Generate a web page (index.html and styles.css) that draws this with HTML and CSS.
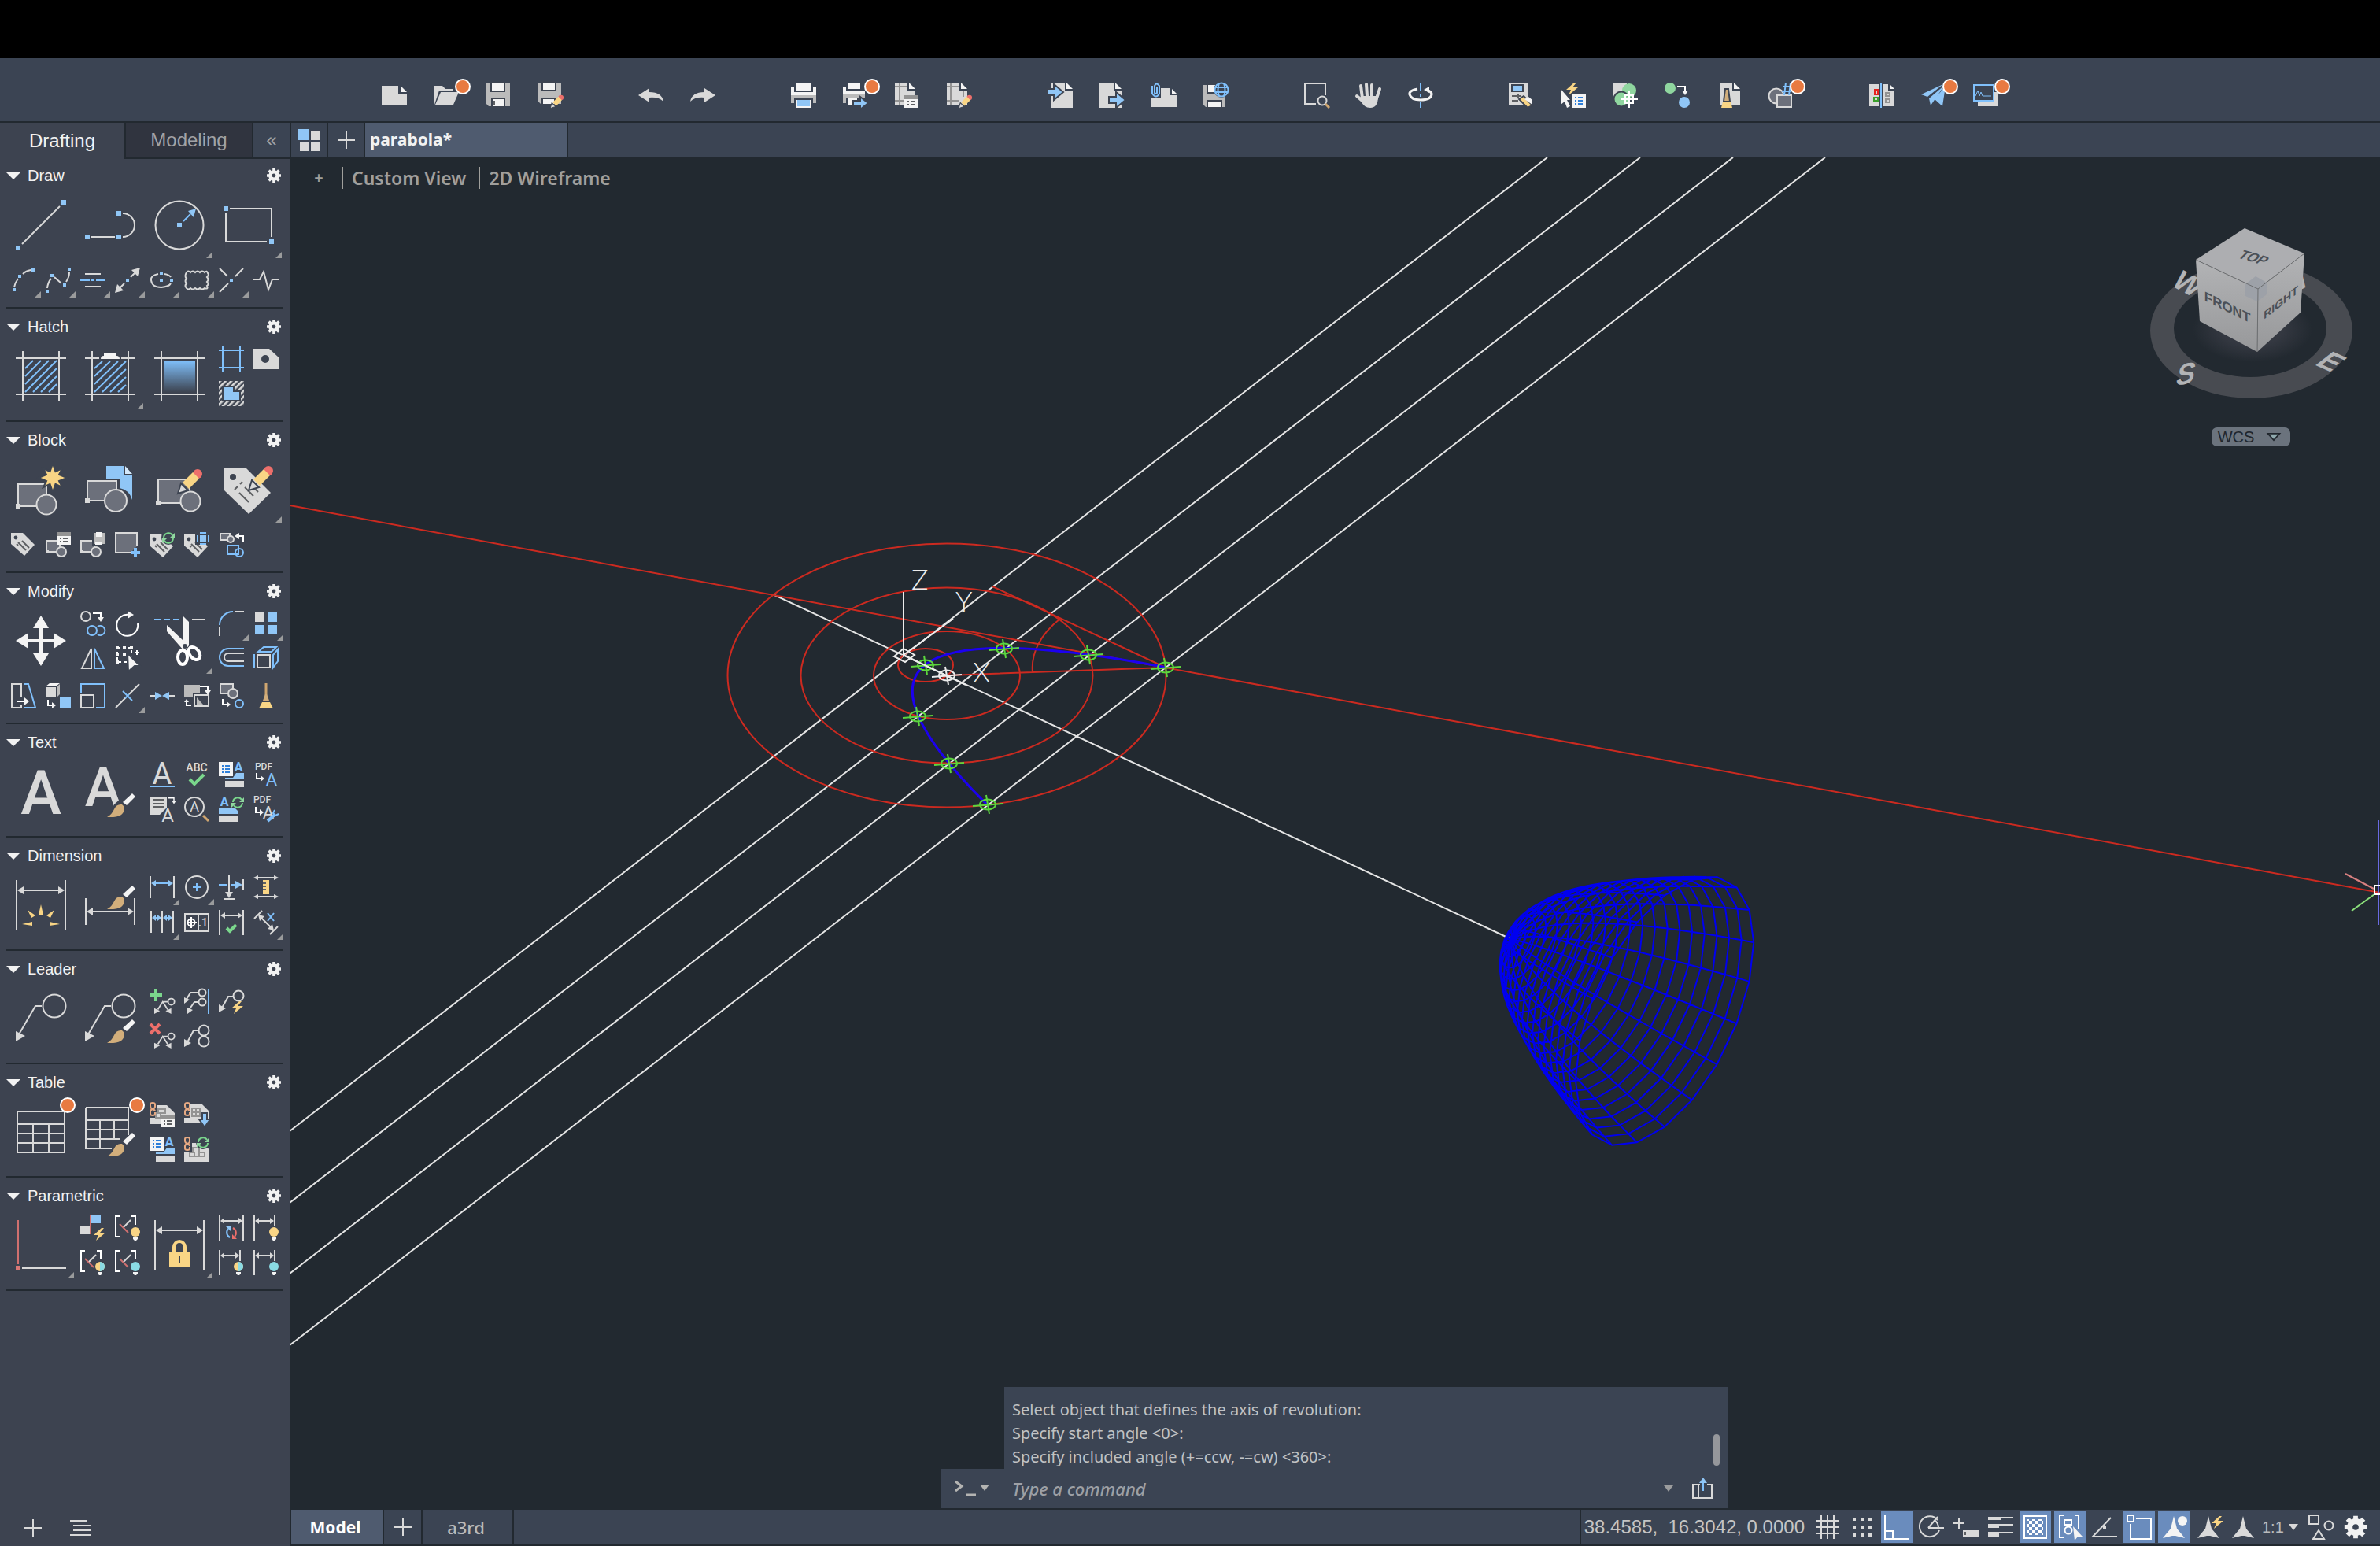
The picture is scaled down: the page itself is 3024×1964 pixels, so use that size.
FILE: index.html
```html
<!DOCTYPE html>
<html lang="en">
<head>
    <meta charset="UTF-8">
    <meta name="viewport" content="width=device-width, initial-scale=1.0">
    <title>parabola* - Drafting</title>
    <link rel="stylesheet" href="styles.css">
</head>
<body>
    <!-- shared icon parts -->
    <svg class="sprite" aria-hidden="true">
        <symbol id="gear" viewBox="0 0 18 18"><circle cx="9" cy="9" r="4.6" fill="none" stroke="currentColor" stroke-width="4.4"/><path d="M9 0v4M9 14v4M0 9h4M14 9h4M2.6 2.6l3 3M12.4 12.4l3 3M2.6 15.4l3-3M12.4 5.6l3-3" stroke="currentColor" stroke-width="3.6" fill="none"/></symbol>
        <g id="brush"><path class="tan" d="M0 30Q6 27 9 20Q12 13 19 14L22 17Q23 29 8 30z"/><path class="fw" d="M20 11L32 0L36 4L25 15z"/></g>
        <g id="pencil"><circle class="fr" cx="25" cy="9" r="6"/><path class="fy" d="M6 20L19 7L27 15L14 28z"/><path class="fl edge" d="M0 34L4 21L13 30z"/></g>
        <g id="bolt"><path class="fy" d="M10 0L0 9h6L3 16L15 6H8L13 0z"/></g>
        <g id="refresh"><path class="g" d="M2 7A6 6 0 0 1 13 4M14 8A6 6 0 0 1 3 11"/><path class="fg" d="M16 1v6h-6zM0 14V8h6z"/></g>
        <g id="tag"><path class="fl" d="M0 1H15L30 16L17 30L0 15z"/><circle class="hole" cx="6" cy="7" r="2.4"/><path class="k" d="M9 13L19 23M14 11L23 20M7 15L9 17"/></g>
        <g id="list"><path class="fw" d="M0 0H18V16H0z"/><path class="fk2" d="M0 0H18V5H0z"/><path class="k" d="M4 8H6M4 12H6M8 8H14M8 12H14"/></g>
        <g id="bluelist"><path class="fw" d="M0 0H18V18H0z"/><path class="db" d="M4 5H6M4 9H6M4 13H6M8 5H14M8 9H14M8 13H14"/></g>
        <g id="shapes"><path class="shape" d="M1 1H18V15H1z"/><circle class="shape" cx="20" cy="15" r="6"/><path class="fl" d="M0 13H4V17H0z"/></g>
        <g id="chain"><path class="o" d="M1 5V3Q1 1 4 1T7 3V6Q7 8 4 9T1 12V15Q1 17 4 17T7 15V13M1 5Q1 8 4 9T7 12"/></g>
        <g id="bulb"><circle cx="6" cy="6" r="6"/><path class="fw" d="M3 13H9V15L7 17H5L3 15z"/></g>
        <g id="flag"><path class="w" d="M6 1H1V27H6M21 1H26V12"/><path class="rs" d="M6 11L17 22"/><path class="l" d="M11 15L20 6"/></g>
        <g id="dim"><path class="l" d="M1 0V32M27 0V14M3 7H25"/><path class="fl" d="M2 7L7 3V11zM26 7L21 3V11z"/></g>
        <g id="turn"><path class="w" d="M0 1H10V8"/><path class="fw" d="M6 6H14L10 12z"/></g>
        <g id="hook"><path class="w" d="M1 0V7H7"/><path class="fw" d="M6 3V11L11 7z"/></g>
        <g id="leader"><path class="l" d="M33 16H25L4 52"/><circle class="l" cx="49" cy="16" r="14.5"/><path class="fl" d="M0 48V61L12 54z"/></g>
        <g id="twohead"><path class="l" d="M5 25L12 14L19 25M13 14H20"/><circle class="l" cx="24" cy="14" r="4.5"/><path class="fl" d="M0 23V31L8 27zM24 23V31L16 27z"/></g>
        <g id="arrowman"><path d="M16 2L20 18L26 25L30 30L18 27H14L2 30L6 25L12 18z"/></g>
        <g id="grille"><path class="l" d="M0 9H64M0 55H64M9 0V64M55 0V64"/></g>
    </svg>

    <div class="notch-bar"></div>

    <header class="toolbar">
        <div class="group">
            <button title="New"><svg viewBox="0 0 32 32"><path class="fl" d="M0 4H21V14H32V28H0z"/><path class="fw" d="M24 4L32 12H24z"/></svg></button>
            <button title="Open" class="badge"><svg viewBox="0 0 32 32"><path class="fl" d="M0 28V4H11L15 8H24V10H7L1 28z"/><path class="fl" d="M9 12H32L25 28H2z"/></svg></button>
            <button title="Save"><svg viewBox="0 0 32 32"><path class="fm" d="M1 1H31V30H4L1 27z"/><path class="fw edge" d="M7 0H24V11H7zM8 20H24V31H8z"/><path class="k" d="M11 23V28"/></svg></button>
            <button title="Save As"><svg viewBox="0 0 32 32"><path class="fm" d="M1 0H30V27H4L1 24z"/><path class="fw edge" d="M6 -1H23V10H6zM6 20H22V28H6z"/><use href="#pencil" transform="translate(16 14) scale(.55)"/></svg></button>
        </div>
        <div class="group">
            <button title="Undo"><svg viewBox="0 0 32 32"><path class="fl" d="M14 7L0 16L14 25V19Q26 18 32 24Q30 12 14 12z"/></svg></button>
            <button title="Redo"><svg viewBox="0 0 32 32"><path class="fl" d="M18 7L32 16L18 25V19Q6 18 0 24Q2 12 18 12z"/></svg></button>
        </div>
        <div class="group">
            <button title="Plot"><svg viewBox="0 0 32 32"><path class="fw" d="M6 0H26V10H6zM0 6H4V12H28V6H32V16H0z"/><path class="fm" d="M0 16H32V26H28V20H4V26H0z"/><path class="fw" d="M6 22H26V32H6z"/><path class="fb" d="M8 22H24V30H8z"/></svg></button>
            <button title="Batch Plot" class="badge"><svg viewBox="0 0 32 32"><path class="fw" d="M6 0H22V8H6zM0 6H4V10H28V14H0z"/><path class="fm" d="M0 14H28V20H0zM0 20H4V26H0z"/><path class="fw" d="M6 20H18V28H6z"/><path class="fb edge" d="M13 23H22V18L32 26L22 34V29H13z"/></svg></button>
            <button title="Page Setup"><svg viewBox="0 0 32 32"><path class="fl" d="M0 0H16V10H26V28H0z"/><path class="fw" d="M18 0L26 8H18z"/><path class="k2" d="M0 5H16M0 23H14M6 0V28"/><use href="#list" x="12" y="16"/></svg></button>
            <button title="Plot Styles"><svg viewBox="0 0 32 32"><path class="fl" d="M0 0H16V10H26V28H0z"/><path class="fw" d="M18 0L26 8H18z"/><path class="k2" d="M0 5H16M0 23H16M5 0V28M21 10V18"/><use href="#pencil" transform="translate(15 14) scale(.55)"/></svg></button>
        </div>
        <div class="group">
            <button title="Import"><svg viewBox="0 0 32 32"><path class="fl" d="M4 0H22V10H32V32H4z"/><path class="fw" d="M24 0L32 8H24z"/><path class="fb edge" d="M-1 8H8V2L20 12L8 22V16H-1z"/></svg></button>
            <button title="Export"><svg viewBox="0 0 32 32"><path class="fl" d="M0 0H18V10H28V32H0z"/><path class="fw" d="M20 0L28 8H20z"/><path class="fb edge" d="M12 18H21V12L33 22L21 32V26H12z"/></svg></button>
            <button title="Attach"><svg viewBox="0 0 32 32"><path class="fl" d="M0 20H12V7H24V16H32V31H0z"/><path class="fw" d="M26 8L32 14H26z"/><path class="b" d="M7 6V13Q5 15 4 13V4Q6 -1 10 4V14Q6 21 1 14V4"/></svg></button>
            <button title="Save to Web"><svg viewBox="0 0 32 32"><path class="fm" d="M0 3H28V31H3L0 28z"/><path class="fw edge" d="M5 2H16V13H5zM5 23H23V32H5z"/><circle cx="23" cy="9" r="10" fill="#3b4453"/><circle class="b" cx="23" cy="9" r="8.5"/><path class="b" d="M15 6H31M15 12H31M20 1Q17 9 20 17M26 1Q29 9 26 17"/></svg></button>
        </div>
        <div class="group">
            <button title="Zoom Window"><svg viewBox="0 0 32 32"><path class="l" d="M15 27H1V1H27V16"/><circle class="l" cx="23" cy="23" r="5.5"/><path class="tans" d="M27 27L32 32"/></svg></button>
            <button title="Pan"><svg viewBox="0 0 32 32"><path d="M8 20L6 4M14 17L13 2M20 17V3M26 20L30 8M9 24L1 17" stroke="#d9d9d9" stroke-width="4" stroke-linecap="round"/><path class="fl" d="M6 17H28Q28 32 18 32Q10 32 6 23z"/></svg></button>
            <button title="Orbit"><svg viewBox="0 0 32 32"><path class="b" d="M16 0V10M16 14V18M16 24V32"/><path d="M12 8Q1 10 2 15Q4 22 16 22Q29 22 30 15Q30 11 23 9" fill="none" stroke="#f2f2f2" stroke-width="3"/><path class="fw" d="M20 9L27 5V13z"/></svg></button>
        </div>
        <div class="group">
            <button title="Properties"><svg viewBox="0 0 32 32"><path class="fl" d="M0 0H24V28H0z"/><path class="fb edge" d="M4 3H18V11H4z"/><path class="k" d="M4 17H16M4 23H12M12 15V19"/><path class="fy edge" d="M13 21L19 17L30 29L24 32z"/><path class="fw" d="M20 21L25 18L30 22V28z"/></svg></button>
            <button title="Quick Select"><svg viewBox="0 0 32 32"><path class="fw" d="M0 8L12 22H8L12 30L8 32L5 24L0 28z"/><use href="#bolt" x="7"/><use href="#bluelist" x="14" y="14"/></svg></button>
            <button title="Set Base Point"><svg viewBox="0 0 32 32"><path class="fl" d="M0 0H18V10H10V22H0z"/><circle class="fg" cx="21" cy="10" r="9"/><circle class="fg edge" cx="11" cy="21" r="9.5"/><path class="w" d="M21 10V32M10 21H32M16 16H26V26H16z"/></svg></button>
            <button title="Match Properties"><svg viewBox="0 0 32 32"><circle class="fg" cx="7" cy="7" r="7"/><circle class="fb" cx="25" cy="25" r="7"/><use href="#turn" x="16" y="4"/></svg></button>
            <button title="Purge"><svg viewBox="0 0 32 32"><path class="fl" d="M4 0H20V10H30V28H4z"/><path class="fw" d="M22 0L30 8H22z"/><path class="tan edge" d="M11 8H15L17 24H9z"/><path class="fy" d="M8 24H18L20 32H6z"/></svg></button>
            <button title="Count" class="badge"><svg viewBox="0 0 32 32"><circle class="shape" cx="10" cy="17" r="9.5"/><path class="shape" d="M11 16H29V31H11z"/><path class="b" d="M18 5H29M17 11H28M22 0L20 16M28 0L26 16"/></svg></button>
        </div>
        <div class="group">
            <button title="Compare"><svg viewBox="0 0 32 32"><path class="fl" d="M0 2H12V30H0zM18 2H24V10H32V30H18z"/><path class="fw" d="M26 2L32 8H26z"/><path class="b" d="M15 0V32"/><path d="M7 9H11V15H7z" stroke="#e5241d" fill="none" stroke-width="2"/><path d="M6 19H11V23H6z" stroke="#3aa12c" fill="none" stroke-width="2"/><path class="k2" d="M21 13H26V17H21zM21 21H26V25H21z"/></svg></button>
            <button title="Share" class="badge"><svg viewBox="0 0 32 32"><path class="fb" d="M0 15L28 2L8 18zM10 20L30 3L12 29zM17 21L31 4L27 30z"/></svg></button>
            <button title="Activity" class="badge"><svg viewBox="0 0 32 32"><path class="fl" d="M6 12H32V30H6z"/><path d="M1 3H26V23H1z" fill="#3b4453" stroke="#80c0fb" stroke-width="2"/><path class="b thin" d="M3 17L6 10L8 17L10 12L12 17H23"/></svg></button>
        </div>
    </header>

    <div class="workspace">
        <aside class="sidebar">
            <nav class="side-tabs">
                <button class="active">Drafting</button>
                <button>Modeling</button>
                <button class="collapse" title="Collapse">«</button>
            </nav>

            <section class="panel">
                <div class="panel-head"><h2>Draw</h2><button title="Draw settings"><svg><use href="#gear"/></svg></button></div>
                <div class="tools">
                    <button class="big" title="Line"><svg viewBox="0 0 64 64"><path class="l" d="M8 56L56 8"/><path class="fb" d="M0 58H6V64H0zM58 0H64V6H58z"/></svg></button>
                    <button class="big" title="Polyline"><svg viewBox="0 0 64 64"><path class="l" d="M8 47H38M48 17A15 15 0 0 1 48 47"/><path class="fb" d="M0 44H6V50H0zM40 44H46V50H40zM40 14H46V20H40z"/></svg></button>
                    <button class="big more" title="Circle"><svg viewBox="0 0 64 64"><circle class="l" cx="32" cy="32" r="30.5"/><path class="b" d="M37 27L46 18"/><path class="fb" d="M29 29H35V35H29zM53 11L50 22L43 14z"/></svg></button>
                    <button class="big more" title="Rectangle"><svg viewBox="0 0 64 64"><path class="l" d="M8 11H61V47M3 17V53H55"/><path class="fb" d="M0 8H6V14H0zM58 50H64V56H58z"/></svg></button>
                </div>
                <div class="tools last">
                    <button class="more" title="Arc"><svg viewBox="0 0 32 32"><path class="l" d="M4 25Q5 19 9 14M15 8Q19 4 25 3"/><path class="fb" d="M2 26H6V30H2zM9 9H13V13H9zM26 1H30V5H26z"/></svg></button>
                    <button class="more" title="Spline"><svg viewBox="0 0 32 32"><path class="l" d="M2 26Q3 18 7 14M11 12L20 20M26 18Q30 12 30 6"/><path class="fb" d="M0 28H4V32H0zM6 8H10V12H6zM22 20H26V24H22zM28 0H32V4H28z"/></svg></button>
                    <button class="more" title="Construction line"><svg viewBox="0 0 32 32"><path class="l" d="M6 8H26M6 24H26"/><path class="b" d="M0 16H12M14 16H18M20 16H32"/></svg></button>
                    <button class="more" title="Ray"><svg viewBox="0 0 32 32"><path class="l" d="M4 28L12 20M20 12L28 4"/><path class="fl" d="M0 32L3 21L11 29zM32 0L21 3L29 11z"/><path class="fb" d="M14 14H18V18H14z"/></svg></button>
                    <button class="more" title="Ellipse"><svg viewBox="0 0 32 32"><path class="l" d="M11 8Q1 10 2 16Q3 25 15 25Q25 24 27 20M19 8Q25 9 27 12"/><path class="fb" d="M13 5H17V9H13zM13 14H17V18H13zM26 14H30V18H26z"/></svg></button>
                    <button class="more" title="Revision cloud"><svg viewBox="0 0 32 32"><path class="l" d="M3 6Q5 3 8 6Q11 3 14 6Q17 3 20 6Q23 3 26 6Q29 3 30 7Q32 9 29 12Q32 15 29 18Q32 21 29 23Q31 28 26 26Q23 29 20 26Q17 29 14 26Q11 29 8 26Q5 29 3 26Q0 23 3 20Q0 17 3 14Q0 11 3 6"/></svg></button>
                    <button class="more" title="Point"><svg viewBox="0 0 32 32"><path class="l" d="M1 1L11 11M31 1L21 11M1 31L12 20"/><path class="fb" d="M14 14H18V18H14z"/></svg></button>
                    <button title="Break line"><svg viewBox="0 0 32 32"><path class="l" d="M0 15H8L13 5L19 28L24 15H32"/></svg></button>
                </div>
            </section>

            <section class="panel">
                <div class="panel-head"><h2>Hatch</h2><button title="Hatch settings"><svg><use href="#gear"/></svg></button></div>
                <div class="tools">
                    <button class="big" title="Hatch"><svg viewBox="0 0 64 64"><use href="#grille"/><path class="b" d="M12 22L22 12M12 32L32 12M12 42L42 12M12 52L52 12M22 52L52 22M32 52L52 32M42 52L52 42"/></svg></button>
                    <button class="big more" title="Recent hatch"><svg viewBox="0 0 64 64"><path class="l" d="M0 9H18M46 9H64M0 55H64M9 0V64M55 0V64"/><path class="fw" d="M24 2H40V6Q44 6 44 10H20Q20 6 24 6z"/><path class="b" d="M12 22L22 13M12 32L32 13M12 42L42 13M12 52L52 13M22 52L52 23M32 52L52 33M42 52L52 43"/></svg></button>
                    <button class="big" title="Gradient"><svg viewBox="0 0 64 64"><linearGradient id="grad" x2="0" y2="1"><stop stop-color="#80c0fb"/><stop offset="1" stop-color="#3d4451"/></linearGradient><use href="#grille"/><path fill="url(#grad)" d="M12 12H52V52H12z"/></svg></button>
                    <button title="Boundary"><svg viewBox="0 0 32 32"><path class="b" d="M0 5H32M0 27H32M5 0V32M27 0V32"/></svg></button>
                    <button title="Region"><svg viewBox="0 0 32 32"><path class="fl" d="M0 3H20L32 14V29H0z"/><circle class="hole" cx="15" cy="16" r="5"/></svg></button>
                    <button title="Wipeout"><svg viewBox="0 0 32 32"><pattern id="stripe" width="5" height="5" patternUnits="userSpaceOnUse" patternTransform="rotate(45)"><path d="M0 0H2.6V5H0z" fill="#d9d9d9"/></pattern><path fill="url(#stripe)" d="M0 0H32V32H0z"/><path class="fb edge" d="M5 7H19V13H27V25H5z"/></svg></button>
                </div>
            </section>

            <section class="panel">
                <div class="panel-head"><h2>Block</h2><button title="Block settings"><svg><use href="#gear"/></svg></button></div>
                <div class="tools">
                    <button class="big" title="Create block"><svg viewBox="0 0 64 64"><path class="shape" d="M3 25H39V53H3z"/><circle class="shape" cx="39" cy="51" r="12.5"/><path class="fl" d="M0 50H6V56H0z"/><path class="fy edge" d="M47 -1L50.500 9L59 5L55 13L65 17L55 21L59 29L50.500 25L47 35L43.500 25L35 29L39 21L29 17L39 13L35 5L43.500 9z"/></svg></button>
                    <button class="big" title="Insert block"><svg viewBox="0 0 64 64"><path class="fb" d="M27 2H49V14H60V45Q56 32 44 30V18H27z"/><path d="M51 2L60 12H51z" fill="#d3e8fb"/><path class="shape" d="M3 21H40V46H3z"/><circle class="shape" cx="39" cy="46" r="14"/><path class="fl" d="M0 43H6V49H0z"/></svg></button>
                    <button class="big" title="Edit block"><svg viewBox="0 0 64 64"><path class="shape" d="M5 19H45V49H5z"/><circle class="shape" cx="46" cy="47" r="12.5"/><path class="fl" d="M2 46H8V52H2z"/><use href="#pencil" x="30" y="3"/></svg></button>
                    <button class="big more" title="Edit attributes"><svg viewBox="0 0 64 64"><path class="fl" d="M0 4H28L60 36L32 63L0 32z"/><circle class="hole" cx="12" cy="16" r="4"/><path class="k" d="M14 32L18 28M21 25L24 22M20 36L32 48M27 29L38 40M34 25L44 35"/><use href="#pencil" x="32" y="-1"/></svg></button>
                </div>
                <div class="tools last">
                    <button title="Attribute"><svg viewBox="0 0 32 32"><use href="#tag"/></svg></button>
                    <button title="Attribute manager"><svg viewBox="0 0 32 32"><use href="#shapes" y="10"/><use href="#list" x="14"/></svg></button>
                    <button title="Write block"><svg viewBox="0 0 32 32"><use href="#shapes" y="10"/><path class="fm edge" d="M16 0H32V16H16z"/><path class="fw" d="M20 0H28V6H20zM19 12H28V16H19z"/></svg></button>
                    <button title="Base point"><svg viewBox="0 0 32 32"><path class="shape" d="M20 26H1V1H28V18"/><path class="b wide" d="M26 20V32M20 26H32"/></svg></button>
                    <button title="Sync attributes"><svg viewBox="0 0 32 32"><use href="#tag" y="2"/><circle cx="24" cy="7" r="9" fill="#3d4451"/><use href="#refresh" x="16"/></svg></button>
                    <button title="Attribute display"><svg viewBox="0 0 32 32"><use href="#tag" y="2"/><path d="M14 0H32V16H14z" fill="#3d4451"/><path class="fb" d="M20 4H28V12H20z"/><path class="b" d="M20 1H28M20 15H28M17 4V12M31 4V12"/></svg></button>
                    <button title="Replace block"><svg viewBox="0 0 32 32"><path class="shape" d="M2 2H14V10H2z"/><circle class="shape" cx="15" cy="9" r="4"/><path class="w" d="M31 12V5H25"/><path class="fw" d="M26 1V9L20 5z"/><path class="b" d="M11 17H25V28H11z"/><circle class="b" cx="26" cy="26" r="5"/></svg></button>
                </div>
            </section>

            <section class="panel">
                <div class="panel-head"><h2>Modify</h2><button title="Modify settings"><svg><use href="#gear"/></svg></button></div>
                <div class="tools">
                    <button class="big" title="Move"><svg viewBox="0 0 64 64"><path class="fw" d="M32 0L42 16H34V30H48V22L64 32L48 42V34H34V48H42L32 64L22 48H30V34H16V42L0 32L16 22V30H30V16H22z"/></svg></button>
                    <button title="Copy"><svg viewBox="0 0 32 32"><circle class="l" cx="7" cy="7" r="6"/><use href="#turn" x="16" y="2"/><circle class="b" cx="15" cy="25" r="6"/><path class="b" d="M22 20A6 6 0 1 1 22 30"/></svg></button>
                    <button title="Rotate"><svg viewBox="0 0 32 32"><path class="w" d="M29 16A13.500 13.500 0 1 1 18 5"/><path class="fw" d="M16 0V10L24 5z"/></svg></button>
                    <button class="big more" title="Trim"><svg viewBox="0 0 64 64"><path class="b" d="M0 5H8M12 5H20M24 5H32"/><path class="l" d="M48 5H64"/><path class="fw" d="M36 0L44 8V38L38 45L16 20V12L36 31z"/><ellipse cx="36" cy="53" rx="6" ry="9" fill="none" stroke="#fff" stroke-width="4"/><ellipse cx="51" cy="48" rx="6" ry="9" fill="none" stroke="#fff" stroke-width="4" transform="rotate(-38 51 48)"/><circle class="hole" cx="39" cy="39" r="3"/></svg></button>
                    <button class="more" title="Fillet"><svg viewBox="0 0 32 32"><path class="b" d="M1 18A17 17 0 0 1 18 1"/><path class="l" d="M20 1H32M1 20V32"/></svg></button>
                    <button class="more" title="Array"><svg viewBox="0 0 32 32"><path class="fl" d="M2 2H14V14H2z"/><path class="fb" d="M18 2H30V14H18zM2 18H14V30H2zM18 18H30V30H18z"/></svg></button>
                    <button title="Mirror"><svg viewBox="0 0 32 32"><path class="l" d="M14 4V29H2z"/><path class="b" d="M18 4V29H30z"/></svg></button>
                    <button title="Edit vertices"><svg viewBox="0 0 32 32"><path class="w" d="M3 3H21V21H3z" stroke-dasharray="4 3"/><path class="fw" d="M1 1H5V5H1zM10 1H14V5H10zM19 1H23V5H19zM1 10H5V14H1zM1 19H5V23H1zM10 10H14V14H10z"/><path class="w" d="M25 9H31M28 6V12"/><path class="fw edge" d="M16 10L32 26H25L17 33z"/></svg></button>
                    <button title="Offset"><svg viewBox="0 0 32 32"><path class="b" d="M32 4H12A11 11 0 0 0 12 26H32"/><path class="l" d="M32 10H12A5 5 0 0 0 12 20H32"/></svg></button>
                    <button title="3D array"><svg viewBox="0 0 32 32"><path class="l" d="M5 12H21V28H5z"/><path class="b" d="M1 11V29M6 8L13 2H29L23 8zM25 12L31 5V20L25 28z"/></svg></button>
                </div>
                <div class="tools last">
                    <button title="Stretch"><svg viewBox="0 0 32 32"><path class="l" d="M13 18V1H1V31H13V27"/><path class="b" d="M16 1H22L31 31H16"/><path class="w" d="M8 23H18"/><path class="fw" d="M17 18V28L23 23z"/></svg></button>
                    <button title="Flatten"><svg viewBox="0 0 32 32"><path class="fl" d="M0 5H13V18H0z"/><path class="fw" d="M0 4L5 0H18L13 4z"/><path class="fm" d="M14 5L18 1V14L14 18z"/><path class="fb" d="M18 18H32V32H18z"/><use href="#hook" x="2" y="21"/></svg></button>
                    <button title="Scale"><svg viewBox="0 0 32 32"><path class="b" d="M1 12V1H31V31H20"/><path class="l" d="M1 15H17V31H1z"/></svg></button>
                    <button class="more" title="Break"><svg viewBox="0 0 32 32"><path class="l" d="M1 31L14 18M18 14L31 1"/><path class="b" d="M10 10L22 22M13 19L18 14"/></svg></button>
                    <button title="Join"><svg viewBox="0 0 32 32"><path class="l" d="M0 16H8M24 16H32"/><path class="fb" d="M7 11V21L16 16zM25 11V21L16 16z"/></svg></button>
                    <button title="Draw order"><svg viewBox="0 0 32 32"><path class="fm" d="M0 2H20V12H11V18H0z"/><path class="l" d="M13 15H31V29H13z"/><path class="fm" d="M16 18L24 27H16z"/><use href="#turn" x="20" y="3"/><path class="w" d="M9 28H3V23"/><path class="fw" d="M0 24H6L3 20z"/></svg></button>
                    <button title="Convert"><svg viewBox="0 0 32 32"><path class="shape" d="M2 1H18V13H2z"/><circle class="shape" cx="18" cy="13" r="6"/><circle class="b" cx="26" cy="26" r="5"/><use href="#hook" x="4" y="20"/></svg></button>
                    <button title="Clean"><svg viewBox="0 0 32 32"><path class="tans" d="M16 0V18"/><path class="tan" d="M15 14H17L20 22H12z"/><path class="fy" d="M11 24H21L25 32H7z"/></svg></button>
                </div>
            </section>

            <section class="panel">
                <div class="panel-head"><h2>Text</h2><button title="Text settings"><svg><use href="#gear"/></svg></button></div>
                <div class="tools">
                    <button class="big" title="Multiline text"><svg viewBox="0 0 64 64"><text class="a78" x="32" y="60">A</text></svg></button>
                    <button class="big" title="Text style"><svg viewBox="0 0 64 64"><text class="a70" x="23" y="50">A</text><path d="M28 66L37 48L46 40L66 28V66z" fill="#3d4350"/><use href="#brush" x="28" y="34"/></svg></button>
                    <button title="Single line text"><svg viewBox="0 0 32 32"><text class="a40" x="16" y="28">A</text><path class="b" d="M0 31H32"/></svg></button>
                    <button title="Spell check"><svg viewBox="0 0 32 32"><text class="t14" x="16" y="12">ABC</text><path class="g wide" d="M7 22L13 28L25 16"/></svg></button>
                    <button title="Text list"><svg viewBox="0 0 32 32"><text class="t16 blue" x="25" y="12">A</text><path class="fb" d="M8 22V20H18L22 14H32V22z"/><path class="fl" d="M8 24H32V32H8z"/><use href="#bluelist"/></svg></button>
                    <button title="PDF to text"><svg viewBox="0 0 32 32"><text class="t12" x="13" y="10">PDF</text><text class="t20 blue" x="23" y="30">A</text><use href="#hook" x="3" y="14"/></svg></button>
                    <button title="Convert to mtext"><svg viewBox="0 0 32 32"><path class="fl" d="M0 0H22V14L13 23H0z"/><path class="k" d="M4 4H18M4 9H18M4 13H18"/><use href="#turn" transform="translate(24 1) scale(.7)"/><text class="t24" x="23" y="32">A</text></svg></button>
                    <button title="Find text"><svg viewBox="0 0 32 32"><circle class="l" cx="13" cy="13" r="12"/><text class="t18" x="13" y="19">A</text><path class="tans" d="M24 24L31 31" stroke-width="4"/></svg></button>
                    <button title="Update text"><svg viewBox="0 0 32 32"><text class="t16 blue" x="7" y="12">A</text><use href="#refresh" x="16"/><path class="fb" d="M0 14H20L24 18V22H0z"/><path class="fl" d="M0 24H24V32H0z"/></svg></button>
                    <button title="PDF text settings"><svg viewBox="0 0 32 32"><text class="t12" x="11" y="8">PDF</text><text class="t20" x="19" y="28">A</text><use href="#hook" x="2" y="13"/><path d="M18 31L27 23" stroke="#80c0fb" stroke-width="4"/><path class="b" d="M27 17L25 21L28 24L32 22"/></svg></button>
                </div>
            </section>

            <section class="panel">
                <div class="panel-head"><h2>Dimension</h2><button title="Dimension settings"><svg><use href="#gear"/></svg></button></div>
                <div class="tools">
                    <button class="big" title="Dimension"><svg viewBox="0 0 64 64"><path class="l" d="M1 0V64M63 0V64M8 13H56"/><path class="fl" d="M2 13L10 8V18zM62 13L54 8V18z"/><path class="fy" d="M32 31L35 44H29zM15 38L25 45L20 48zM49 38L44 48L39 45zM8 56L21 53V58zM56 56L43 53V58z"/></svg></button>
                    <button class="big" title="Dimension style"><svg viewBox="0 0 64 64"><path class="l" d="M1 23V57M63 23V57M8 40H56"/><path class="fl" d="M2 40L10 35V45zM62 40L54 35V45z"/><use href="#brush" x="28" y="7"/></svg></button>
                    <button class="more" title="Linear"><svg viewBox="0 0 32 32"><path class="l" d="M1 1V29M31 1V29"/><path class="b" d="M5 10H27"/><path class="fb" d="M2 10L8 6V14zM30 10L24 6V14z"/></svg></button>
                    <button class="more" title="Center mark"><svg viewBox="0 0 32 32"><circle class="l" cx="16" cy="15" r="14"/><path class="b" d="M11 15H21M16 10V20"/></svg></button>
                    <button title="Ordinate"><svg viewBox="0 0 32 32"><path class="l" d="M13 -1V23M31 5V19M6 30H20"/><path class="b" d="M0 12H10M16 12H22"/><path class="fb" d="M21 7V17L30 12z"/><path class="fl" d="M8 21H18L13 29z"/></svg></button>
                    <button title="Measure"><svg viewBox="0 0 32 32"><path class="l" d="M4 3H28M4 27H28"/><path class="fl" d="M0 3L6 0V6zM32 3L26 0V6zM0 27L6 24V30zM32 27L26 24V30z"/><path class="fy" d="M12 6H20V24H12z"/><path class="k" d="M12 10H16M12 14H16M12 18H16"/></svg></button>
                    <button class="more" title="Continue"><svg viewBox="0 0 32 32"><path class="l" d="M2 1V29M16 1V29M30 1V29"/><path class="b" d="M4 10H14M18 10H28"/><path class="fb" d="M3 10L8 6V14zM15 10L10 6V14zM17 10L22 6V14zM29 10L24 6V14z"/></svg></button>
                    <button title="Tolerance"><svg viewBox="0 0 32 32"><path class="l" d="M1 5H31V27H1zM18 5V27"/><circle class="w" cx="9" cy="16" r="4.500"/><path class="w" d="M9 9V23M3 16H16"/><text class="t14" x="24" y="21">.1</text></svg></button>
                    <button title="Inspect"><svg viewBox="0 0 32 32"><path class="l" d="M1 0V32M31 0V32M5 7H27"/><path class="fl" d="M2 7L8 3V11zM30 7L24 3V11z"/><path class="g wide" d="M10 23L14 27L22 19"/></svg></button>
                    <button class="more" title="Break dimension"><svg viewBox="0 0 32 32"><path class="l" d="M1 11L11 1M21 31L31 21M9 9L23 23"/><path class="fl" d="M6 6L14 8L8 14zM26 26L18 24L24 18z"/><path class="b" d="M18 4L26 14M26 4L18 14"/></svg></button>
                </div>
            </section>

            <section class="panel">
                <div class="panel-head"><h2>Leader</h2><button title="Leader settings"><svg><use href="#gear"/></svg></button></div>
                <div class="tools">
                    <button class="big" title="Multileader"><svg viewBox="0 0 64 64"><use href="#leader"/></svg></button>
                    <button class="big" title="Multileader style"><svg viewBox="0 0 64 64"><use href="#leader"/><use href="#brush" x="28" y="33"/></svg></button>
                    <button title="Add leader"><svg viewBox="0 0 32 32"><path class="g wide" d="M8 0V16M0 8H16"/><use href="#twohead" transform="translate(6 4) scale(.9)"/></svg></button>
                    <button title="Align leaders"><svg viewBox="0 0 32 32"><path class="l" d="M2 15L8 5H18M6 27L13 17H18"/><circle class="l" cx="23" cy="5" r="4.500"/><circle class="l" cx="23" cy="17" r="4.500"/><path class="fl" d="M0 11V19L7 14zM4 24V32L11 27z"/><path class="b" d="M31 0V32"/></svg></button>
                    <button title="Auto leader"><svg viewBox="0 0 32 32"><path class="l" d="M3 26L12 10H18"/><circle class="l" cx="25" cy="9" r="6.500"/><path class="fl" d="M0 20V30L9 25z"/><use href="#bolt" x="16" y="16"/></svg></button>
                    <button class="row2 col5" title="Remove leader"><svg viewBox="0 0 32 32"><path d="M1 1L13 13M13 1L1 13" stroke="#ed6f6b" stroke-width="4"/><use href="#twohead" transform="translate(6 4) scale(.9)"/></svg></button>
                    <button class="row2 col6" title="Collect leaders"><svg viewBox="0 0 32 32"><path class="l" d="M3 26L12 9H18"/><circle class="l" cx="25" cy="9" r="6.500"/><circle class="l" cx="25" cy="23" r="6.500"/><path class="fl" d="M0 20V30L9 25z"/></svg></button>
                </div>
            </section>

            <section class="panel">
                <div class="panel-head"><h2>Table</h2><button title="Table settings"><svg><use href="#gear"/></svg></button></div>
                <div class="tools">
                    <button class="big badge" title="Table"><svg viewBox="0 0 64 64"><path class="l" d="M2 6H62V58H2zM2 22H62M2 34H62M2 46H62M22 22V58M42 22V58"/></svg></button>
                    <button class="big badge" title="Table style"><svg viewBox="0 0 64 64"><path class="l" d="M1 1H55V36M34 53H1V1M1 17H55M1 29H55M1 41H44M19 17V53M37 17V42"/><use href="#brush" x="28" y="33"/></svg></button>
                    <button title="Data link"><svg viewBox="0 0 32 32"><path class="fl" d="M0 20H10V4H22L32 14V28H0z"/><path class="k2" d="M11 9H20V14H11zM8 20V14H14V20z"/><use href="#chain"/><use href="#list" x="14" y="16"/></svg></button>
                    <button title="Download link"><svg viewBox="0 0 32 32"><path class="fl" d="M0 20H8V2H22L32 12V26H0z"/><path class="k2" d="M10 8H20V13H10zM10 13H20V18H10zM15 8V18"/><use href="#chain"/><path class="fb edge" d="M23 14H29V22H33L26 32L19 22H23z"/></svg></button>
                    <button class="row2 col5" title="Field"><svg viewBox="0 0 32 32"><text class="t16 blue" x="25" y="12">A</text><path class="fb" d="M8 22V20H18L22 14H32V22z"/><path class="fl" d="M8 24H32V32H8z"/><use href="#bluelist"/></svg></button>
                    <button class="row2 col6" title="Refresh link"><svg viewBox="0 0 32 32"><path class="fl" d="M0 20H10V8H18L32 16V32H0z"/><path class="k2" d="M11 14H19V20H26V25H7V20H11zM13 20V25M19 20V25"/><use href="#chain"/><circle cx="24" cy="7" r="9" fill="#3d4451"/><use href="#refresh" x="16"/></svg></button>
                </div>
            </section>

            <section class="panel">
                <div class="panel-head"><h2>Parametric</h2><button title="Parametric settings"><svg><use href="#gear"/></svg></button></div>
                <div class="tools">
                    <button class="big more" title="Geometric constraint"><svg viewBox="0 0 64 64"><path class="rs" d="M3 0V56"/><path class="fr2" d="M0 58H6V64H0z"/><path class="l" d="M8 61H64"/></svg></button>
                    <button title="Auto constrain"><svg viewBox="0 0 32 32"><path class="fl" d="M0 14H12V24H0z"/><path class="fb" d="M14 0H26V10H14z"/><path class="rs" d="M13 0V24"/><use href="#bolt" x="17" y="16"/></svg></button>
                    <button title="Show constraint"><svg viewBox="0 0 32 32"><use href="#flag"/><use class="fy" href="#bulb" x="20" y="15"/></svg></button>
                    <button class="big more" title="Dimensional constraint"><svg viewBox="0 0 64 64"><path class="l" d="M1 0V64M63 0V64M8 13H56"/><path class="fl" d="M2 13L10 8V18zM62 13L54 8V18z"/><path d="M25 41V34A7 7 0 0 1 39 34V41" fill="none" stroke="#f9d585" stroke-width="4"/><path class="fy" d="M19 40H45V60H19z"/><path class="hole" d="M31 46H33V54H31z"/></svg></button>
                    <button title="Convert constraint"><svg viewBox="0 0 32 32"><path class="l" d="M1 0V32M31 0V32M5 7H27"/><path class="fl" d="M2 7L7 3V11zM30 7L25 3V11z"/><path class="b" d="M14 28A7 7 0 0 1 12 17"/><path d="M18 16A7 7 0 0 1 20 27" fill="none" stroke="#ed6f6b" stroke-width="2"/><path class="fb" d="M9 14H15V20z"/><path class="fr" d="M23 30H17V24z"/></svg></button>
                    <button title="Show dimension"><svg viewBox="0 0 32 32"><use href="#dim"/><use class="fy" href="#bulb" x="20" y="15"/></svg></button>
                    <button title="Toggle constraint"><svg viewBox="0 0 32 32"><use href="#flag"/><use class="fy" href="#bulb" x="19" y="15"/><path class="fc" d="M25 15A6 6 0 0 1 25 27z"/></svg></button>
                    <button title="Hide constraint"><svg viewBox="0 0 32 32"><use href="#flag"/><use class="fc" href="#bulb" x="20" y="15"/></svg></button>
                    <button title="Toggle dimension"><svg viewBox="0 0 32 32"><use href="#dim"/><use class="fy" href="#bulb" x="19" y="15"/><path class="fc" d="M25 15A6 6 0 0 1 25 27z"/></svg></button>
                    <button title="Hide dimension"><svg viewBox="0 0 32 32"><use href="#dim"/><use class="fc" href="#bulb" x="20" y="15"/></svg></button>
                </div>
            </section>

            <footer class="side-foot">
                <button title="Add panel"><svg viewBox="0 0 24 24"><path class="l" d="M12 1V23M1 12H23"/></svg></button>
                <button title="Panel list"><svg viewBox="0 0 28 24"><path class="l" d="M1 3H22M5 9H27M5 15H27M1 21H27"/></svg></button>
            </footer>
        </aside>

        <main class="main">
            <nav class="file-tabs">
                <button class="square" title="Start"><svg viewBox="0 0 28 28"><path class="fb" d="M0 0H14V14H0z"/><path class="fl" d="M16 2H28V14H16zM2 16H14V28H2zM16 16H28V28H16z"/></svg></button>
                <button class="square" title="New drawing"><svg viewBox="0 0 22 22"><path class="l" d="M11 0V22M0 11H22"/></svg></button>
                <button class="file">parabola*</button>
                <div class="fill"></div>
            </nav>

            <div class="viewport">
                <svg class="canvas" viewBox="368 200 2656 1718" preserveAspectRatio="xMinYMin slice">
                    <g class="white-lines">
                        <path d="M368 1437L1966 200M368 1528L2084 200M368 1618L2202 200M368 1709L2319 200M984 756L1922 1194"/>
                    </g>
                    <g class="red-lines">
                        <ellipse cx="1203" cy="858" rx="278.500" ry="167.500"/>
                        <ellipse cx="1203" cy="858" rx="185.500" ry="111.500"/>
                        <ellipse cx="1203" cy="858" rx="93" ry="56"/>
                        <ellipse cx="1176" cy="845" rx="35" ry="21"/>
                        <path d="M368 642L3024 1134M1261 745L1481 848L1204 858M1347 786A169 102 0 0 0 1312 854"/>
                    </g>
                    <path class="parabola" d="M1254.700 1022.700Q984 753.400 1481 847.700"/>
                    <g class="points">
                        <g id="pt"><ellipse cx="1176" cy="845" rx="10" ry="6.500"/><path d="M1157 847L1195 844M1174 833L1178 857"/></g>
                        <use href="#pt" x="100" y="-21"/>
                        <use href="#pt" x="207" y="-13"/>
                        <use href="#pt" x="305" y="3"/>
                        <use href="#pt" x="-10" y="65"/>
                        <use href="#pt" x="30" y="125"/>
                        <use href="#pt" x="79" y="177"/>
                    </g>
                    <g class="ucs">
                        <path d="M1148 752V832L1211 786M1148 832L1227 870M1148 824L1162 832L1150 841L1136 834z"/>
                        <ellipse cx="1203" cy="858" rx="10" ry="6.500"/><path d="M1184 860L1222 857M1201 847L1205 870"/>
                        <text x="1158" y="749">Z</text>
                        <text x="1214" y="777">Y</text>
                        <text x="1236" y="867">X</text>
                    </g>
                    <path class="mesh" id="mesh" d=""/>
                    <path d="M2980 1110L3016 1129" stroke="#d98080" stroke-width="2"/>
                    <path d="M2988 1157L3017 1136" stroke="#8be07a" stroke-width="2"/>
                    <path d="M3022 1042V1175" stroke="#6a6ae2" stroke-width="2"/>
                    <path d="M3026 1125H3017V1136H3026" fill="none" stroke="#fff" stroke-width="2"/>
                </svg>

                <div class="view-label">
                    <button class="plus">+</button>
                    <button class="bar">Custom View</button>
                    <button class="bar">2D Wireframe</button>
                </div>

                <div class="viewcube">
                    <svg viewBox="2720 280 280 240">
                        <defs>
                            <linearGradient id="front" x2="0" y2="1"><stop stop-color="#b2b3b5"/><stop offset="1" stop-color="#97989a"/></linearGradient>
                            <radialGradient id="shade"><stop offset=".5" stop-color="#343841"/><stop offset="1" stop-color="#343841" stop-opacity="0"/></radialGradient>
                        </defs>
                        <path fill="#484b51" fill-rule="evenodd" d="M2732 420A128.500 86 0 1 0 2989 420A128.500 86 0 1 0 2732 420zM2762 417A97 62 0 1 0 2956 417A97 62 0 1 0 2762 417z"/>
                        <ellipse cx="2862" cy="418" rx="76" ry="42" fill="url(#shade)"/>
                        <g class="compass">
                            <text transform="translate(2772 370) rotate(28) skewX(-14)">W</text>
                            <text transform="translate(2920 370) rotate(-28) skewX(-14)">N</text>
                            <text transform="translate(2775 488) rotate(-12) skewX(-24)">S</text>
                            <text transform="translate(2951 468) rotate(24) skewX(-28)">E</text>
                        </g>
                        <path fill="#adaeb1" d="M2852 290L2928 322L2869 367L2790 330z"/>
                        <path fill="url(#front)" d="M2790 330L2869 367L2868 447L2795 408z"/>
                        <path fill="url(#front)" d="M2928 322L2869 367L2868 447L2923 397z"/>
                        <path fill="#9da1a8" d="M2866 351L2880 359V374L2868 383L2853 376V361z"/>
                        <path d="M2790 330L2869 367L2928 322M2869 367L2868 447" fill="none" stroke="#6c6e70"/>
                        <g class="faces">
                            <text transform="translate(2859 332) rotate(16) skewX(-28)">TOP</text>
                            <text transform="translate(2830 396) skewY(26)">FRONT</text>
                            <text class="side" transform="translate(2898 389) skewY(-38)">RIGHT</text>
                        </g>
                    </svg>
                    <button class="wcs">WCS <svg viewBox="0 0 20 12"><path d="M1 1H19L10 11z" fill="#8fa9ae" stroke="#20262d" stroke-width="2"/></svg></button>
                </div>

                <div class="command">
                    <div class="log">
                        <p>Select object that defines the axis of revolution:</p>
                        <p>Specify start angle &lt;0&gt;:</p>
                        <p>Specify included angle (+=ccw, -=cw) &lt;360&gt;:</p>
                        <span class="thumb"></span>
                    </div>
                    <div class="prompt">
                        <button class="prompt-btn" title="Recent commands"><svg viewBox="0 0 46 22"><path d="M1 2L9 8L1 14M14 19H27" fill="none" stroke="#b4b4b2" stroke-width="3"/><path d="M32 6H44L38 14z" fill="#b4b4b2"/></svg></button>
                        <input type="text" placeholder="Type a command" aria-label="Command">
                        <button title="History"><svg class="caret" viewBox="0 0 12 8"><path d="M0 0H12L6 8z" fill="#9b9c9d"/></svg></button>
                        <button title="Detach"><svg class="detach" viewBox="0 0 26 28"><path class="l" d="M10 9H1V26H25V9H19M8 9V26"/><path class="b" d="M14 5V17"/><path class="fb" d="M9 7H19L14 0z"/></svg></button>
                    </div>
                </div>
            </div>

            <footer class="status">
                <button class="layout active">Model</button>
                <button class="square" title="New layout"><svg viewBox="0 0 22 22"><path class="l" d="M11 0V22M0 11H22"/></svg></button>
                <button class="layout">a3rd</button>
                <div class="fill"></div>
                <div class="modes">
                    <span class="coords">38.4585,&nbsp; 16.3042, 0.0000</span>
                    <button title="Grid"><svg viewBox="0 0 32 32"><path class="l" d="M8 1V31M16 1V31M24 1V31M1 8H31M1 16H31M1 24H31"/></svg></button>
                    <button title="Snap"><svg viewBox="0 0 32 32"><path class="fl" d="M4 4h4v4H4zM14 4h4v4h-4zM24 4h4v4h-4zM4 14h4v4H4zM14 14h4v4h-4zM24 14h4v4h-4zM4 24h4v4H4zM14 24h4v4h-4zM24 24h4v4h-4z"/></svg></button>
                    <button class="on" title="Ortho"><svg viewBox="0 0 32 32"><path class="w" d="M1 0V31H32M1 21H11V31"/></svg></button>
                    <button title="Polar"><svg viewBox="0 0 32 32"><path class="l" d="M24 7A13 13 0 1 0 26 20M12 17L24 3M12 17H32M20 7Q25 11 25 17"/></svg></button>
                    <button title="Dynamic input"><svg viewBox="0 0 32 32"><path class="l" d="M0 11H14M7 4V18"/><path class="fl" d="M12 20H32V28H12z"/><path class="k" d="M15 22V26"/></svg></button>
                    <button title="Lineweight"><svg viewBox="0 0 32 32"><path class="fl" d="M0 3H16V7H0zM16 3H32V5H16zM0 12H14V17H0zM14 12H32V14H14zM0 22H14V29H0zM14 22H32V24H14z"/></svg></button>
                    <button class="on" title="Transparency"><svg viewBox="0 0 32 32"><pattern id="check" width="8" height="8" patternUnits="userSpaceOnUse"><path fill="#fff" d="M0 0H4V4H0zM4 4H8V8H4z"/></pattern><path class="w" d="M2 2H30V30H2z"/><path fill="url(#check)" d="M6 6H26V26H6z"/></svg></button>
                    <button class="on" title="Selection cycling"><svg viewBox="0 0 32 32"><path class="w" d="M8 1H3V29H8M22 1H27V18M9 7H18V13H9z"/><circle class="w" cx="14" cy="20" r="4.500"/><path class="fw" d="M20 15L32 28H26L22 33z"/></svg></button>
                    <button title="Object track"><svg viewBox="0 0 32 32"><path class="l" d="M24 4L1 28H32"/><path class="fl" d="M14 14H18V18H14z"/></svg></button>
                    <button class="on" title="Object snap"><svg viewBox="0 0 32 32"><path class="w" d="M1 1H9V9H1zM12 5H31V31H5V12"/></svg></button>
                    <button class="on" title="Annotation visibility"><svg viewBox="0 0 32 32"><use class="fw" href="#arrowman"/><circle class="fw" cx="27" cy="8" r="6"/></svg></button>
                    <button title="Annotation autoscale"><svg viewBox="0 0 32 32"><use class="fl" href="#arrowman"/><use href="#bolt" x="20" y="2"/></svg></button>
                    <button title="Annotation scale"><svg viewBox="0 0 32 32"><use class="fl" href="#arrowman"/></svg></button>
                    <button class="scale">1:1 <svg viewBox="0 0 12 8"><path class="fl" d="M0 0H12L6 8z"/></svg></button>
                    <button title="Isolate objects"><svg viewBox="0 0 32 32"><path class="l" d="M1 1H13V12H1zM13 20L20 31H6z"/><circle class="l" cx="26" cy="14" r="5.500"/></svg></button>
                    <button title="Customize"><svg viewBox="-1 -1 20 20"><use href="#gear" width="18" height="18"/></svg></button>
                </div>
            </footer>
        </main>
    </div>
    <script src="mesh.js"></script>
</body>
</html>
```
FILE: styles.css
```css
*, *::before, *::after { box-sizing: border-box; }
body { margin: 0; height: 100vh; display: flex; flex-direction: column; background: #222930; color: #f2f2f2; font-family: "Liberation Sans", Arial, sans-serif; font-size: 20px; overflow: hidden; }
button { background: none; border: none; padding: 0; margin: 0; color: inherit; font: inherit; display: flex; align-items: center; justify-content: center; cursor: pointer; }
h2, p { margin: 0; font-weight: 400; }
svg { display: block; overflow: visible; }
.sprite { position: absolute; width: 0; height: 0; }

/* icon paints */
.l, .b, .w, .g, .k, .k2, .db, .o, .rs, .tans { fill: none; stroke-width: 2; }
.l { stroke: #d9d9d9; }
.b { stroke: #80c0fb; }
.w { stroke: #ffffff; }
.g { stroke: #7ad68c; }
.k { stroke: #5d5f62; }
.k2 { stroke: #939393; }
.db { stroke: #2f7fd8; }
.o { stroke: #e6a983; }
.rs { stroke: #d0706f; }
.tans { stroke: #cfa670; stroke-width: 3; }
.wide { stroke-width: 4; }
.thin { stroke-width: 1; }
.fl { fill: #d9d9d9; }
.fb { fill: #90c6f6; }
.fw { fill: #f4f4f4; }
.fm { fill: #bbbbbb; }
.fy { fill: #f9d585; }
.fg { fill: #8fd69f; }
.fr { fill: #ed6f6b; }
.fr2 { fill: #d97876; }
.fc { fill: #8adbe4; }
.fk2 { fill: #939393; }
.tan { fill: #d2ae7b; }
.hole { fill: #3d4451; }
.edge { stroke: #3d4451; stroke-width: 2; }
.shape { fill: #6c707b; stroke: #d9d9d9; stroke-width: 2; }
svg text { fill: #d9d9d9; text-anchor: middle; font-family: Roboto, "Liberation Sans", sans-serif; }
svg .blue { fill: #80c0fb; }
.a78 { font-size: 78px; font-weight: 500; }
.a70 { font-size: 70px; font-weight: 500; }
.a40 { font-size: 38px; }
.t24 { font-size: 24px; }
.t20 { font-size: 22px; }
.t18 { font-size: 18px; }
.t16 { font-size: 16px; font-weight: 700; }
.t14 { font-size: 14px; font-weight: 500; }
.t12 { font-size: 12px; font-weight: 500; }

.notch-bar { height: 74px; background: #000; }

.toolbar { height: 82px; padding-top: 14px; display: flex; justify-content: center; align-items: center; gap: 62px; background: #3b4453; border-bottom: 2px solid #222930; }
.group { display: flex; }
.group button { width: 66px; height: 66px; }
.group svg { width: 32px; height: 32px; }
.badge { position: relative; }
.badge::before { content: ""; position: absolute; left: 44px; top: 12px; width: 20px; height: 20px; border-radius: 50%; border: 2px solid #fff; background: #e87a41; z-index: 1; }
.big.badge::before { left: 68px; top: 0; }

.workspace { flex: 1; min-height: 0; display: grid; grid-template-columns: 368px 1fr; }

.sidebar { display: flex; flex-direction: column; background: #3d4350; }
.side-tabs { display: grid; grid-template-columns: 158px 1fr 46px; height: 44px; }
.side-tabs button { font-size: 24px; }
.side-tabs button:nth-child(2) { background: #30343f; color: #a2a3a6; border: solid #222930; border-width: 0 2px 2px; height: 46px; }
.side-tabs .collapse { color: #a2a3a6; background: #3b4453; height: 46px; border-bottom: 2px solid #222930; }

.panel { margin: 0 8px; padding-bottom: 12px; border-bottom: 2px solid #222930; }
.panel-head { height: 42px; padding: 4px 2px 0 0; display: flex; align-items: center; justify-content: space-between; }
.panel-head h2 { display: flex; align-items: center; gap: 9px; font-size: 20px; line-height: 24px; padding-bottom: 1px; }
.panel-head h2::before { content: ""; border: 9px solid transparent; border-top: 9px solid #f2f2f2; border-bottom: none; width: 0; margin-top: 2px; }
.panel-head button, .panel-head svg { width: 20px; height: 18px; }
.tools { display: grid; grid-template-columns: repeat(8, 44px); grid-auto-rows: 44px; grid-auto-flow: row dense; }
.tools.last { margin-top: 4px; }
.tools button { position: relative; }
.tools svg { width: 32px; height: 32px; }
.tools .big { grid-column: span 2; grid-row: span 2; }
.tools .big svg { width: 64px; height: 64px; }
.tools .row2 { grid-row: 2; }
.tools .col5 { grid-column: 5; }
.tools .col6 { grid-column: 6; }
.more::after { content: ""; position: absolute; right: 0; bottom: 0; border-left: 8px solid transparent; border-bottom: 8px solid #9a9b9c; }
.big.more::after { right: 2px; bottom: 2px; }
.side-foot { margin-top: auto; height: 46px; padding: 0 30px; display: flex; align-items: center; gap: 34px; }
.side-foot button:first-child svg { width: 24px; height: 24px; }
.side-foot button svg { width: 28px; height: 24px; }

.main { display: flex; flex-direction: column; min-width: 0; }
.file-tabs { height: 44px; padding-left: 2px; display: flex; gap: 2px; }
.file-tabs > * { background: #3b4453; }
.square { width: 45px; }
.square svg { width: 22px; height: 22px; }
.square:first-child svg { width: 28px; height: 28px; }
.fill { flex: 1; background: #3b4453; }
.file-tabs .file { width: 256px; justify-content: flex-start; padding: 0 6px 2px; background: #4f5b6f; font: 700 21px/28px "Noto Sans", sans-serif; }

.viewport { flex: 1; position: relative; min-height: 0; background: #222930; overflow: hidden; }
.canvas { width: 100%; height: 100%; }
.white-lines { stroke: #e4e4e4; stroke-width: 2; fill: none; }
.red-lines { stroke: #cc2a20; stroke-width: 2; fill: none; }
.parabola { stroke: #1c00f0; stroke-width: 3; fill: none; }
.points { stroke: #5cd63e; stroke-width: 2; fill: none; }
.ucs { stroke: #ececec; stroke-width: 2; fill: none; }
.canvas .ucs text { text-anchor: start; stroke: none; fill: #ececec; font: 300 36px Lato, "Open Sans", sans-serif; }
.mesh { stroke: #0000f0; stroke-width: 2; fill: none; }

.view-label { position: absolute; left: 24px; top: 10px; display: flex; align-items: center; gap: 16px; color: #a09f9c; font: 600 23px/32px "Noto Sans", sans-serif; }
.view-label .plus { width: 26px; font-size: 20px; }
.view-label .bar { border-left: 2px solid #a09f9c; padding-left: 11px; height: 28px; }

.viewcube { position: absolute; right: 24px; top: 80px; width: 280px; display: flex; flex-direction: column; align-items: center; gap: 23px; }
.viewcube > svg { width: 280px; height: 240px; }
.viewcube .compass text { font: 700 36px "Liberation Sans", sans-serif; fill: #b2b3b5; }
.viewcube .faces text { font: 700 17px "Liberation Sans", sans-serif; fill: #4b5057; }
.viewcube .faces .side { font-size: 14px; }
.wcs { height: 24px; padding: 0 12px 0 8px; gap: 16px; border-radius: 7px; background: #6b737d; color: #20262d; font-size: 20px; }
.wcs svg { width: 18px; height: 10px; }

.command { position: absolute; left: 0; right: 0; bottom: 2px; width: 1000px; margin: 0 auto; color: #c0c2c4; font: 500 20px/30px "Noto Sans", sans-serif; }
.log { position: relative; margin-left: 80px; height: 104px; padding: 14px 10px 0; background: #3b4453; }
.thumb { position: absolute; right: 11px; bottom: 4px; width: 8px; height: 40px; border-radius: 4px; background: #95979b; }
.prompt { height: 50px; display: flex; align-items: center; background: #3b4453; padding-right: 20px; gap: 24px; }
.prompt-btn { width: 66px; padding-left: 17px; justify-content: flex-start; }
.prompt-btn svg { width: 46px; height: 22px; flex: none; }
.prompt input { flex: 1; min-width: 0; background: none; border: none; outline: none; padding: 0; color: #d9d9d9; font: italic 500 22px/30px "Noto Sans", sans-serif; }
.prompt input::placeholder { color: #9da0a5; opacity: 1; }
.caret { width: 12px; height: 8px; }
.detach { width: 26px; height: 28px; }

.status { height: 46px; padding-left: 2px; display: flex; gap: 2px; border-bottom: 2px solid #222930; }
.status > * { background: #3b4453; }
.status .square { width: 47px; }
.layout { width: 116px; padding-right: 4px; color: #b9babb; font: 500 22px/30px "Noto Sans", sans-serif; }
.layout + .square + .layout { width: 114px; }
.status .active { background: #4f5b6f; color: #fff; font-weight: 700; font-size: 21px; }
.modes { display: flex; align-items: center; padding: 0 11px 0 4px; gap: 4px; }
.modes button { width: 40px; height: 40px; }
.modes svg { width: 32px; height: 32px; }
.coords { font-size: 24px; color: #c4c4c4; margin-right: 5px; white-space: nowrap; }
.modes .on { background: #6a8cbd; }
.modes .scale { width: 51px; gap: 6px; justify-content: flex-start; font-size: 20px; color: #b9babb; }
.modes .scale svg { width: 12px; height: 8px; }
```
FILE: mesh.js
```js
// Revolved parabola: rings spaced evenly along the profile, 20 meridians
var apex = [1922, 1193.5];
var axis = [193, 91];
var u = [66.7, -170.3];
var v = [91.5, 15.8];
var SIDES = 20;
var STEP = 0.1705;

function arcLength(t) {
    return 0.5 * t * Math.sqrt(5 + 25 * t * t) + 0.5 * Math.asinh(2.236 * t);
}

function solve(s) {
    var lo = 0, hi = 1;
    for (var i = 0; i < 30; i++) {
        var mid = (lo + hi) / 2;
        if (arcLength(mid) < s) lo = mid; else hi = mid;
    }
    return lo;
}

function point(t, k) {
    var a = k * 2 * Math.PI / SIDES;
    var x = apex[0] + t * t * axis[0] + t * (u[0] * Math.cos(a) + v[0] * Math.sin(a));
    var y = apex[1] + t * t * axis[1] + t * (u[1] * Math.cos(a) + v[1] * Math.sin(a));
    return x.toFixed(1) + ' ' + y.toFixed(1);
}

var ts = [];
for (var s = arcLength(1); s > 0; s -= STEP) ts.push(solve(s));
ts.push(0);

var d = '';
ts.forEach(function (t) {
    var ring = [];
    for (var k = 0; k < SIDES; k++) ring.push(point(t, k));
    d += 'M' + ring.join('L') + 'z';
});
for (var k = 0; k < SIDES; k++) {
    d += 'M' + ts.map(function (t) { return point(t, k); }).join('L');
}
document.getElementById('mesh').setAttribute('d', d);
```
